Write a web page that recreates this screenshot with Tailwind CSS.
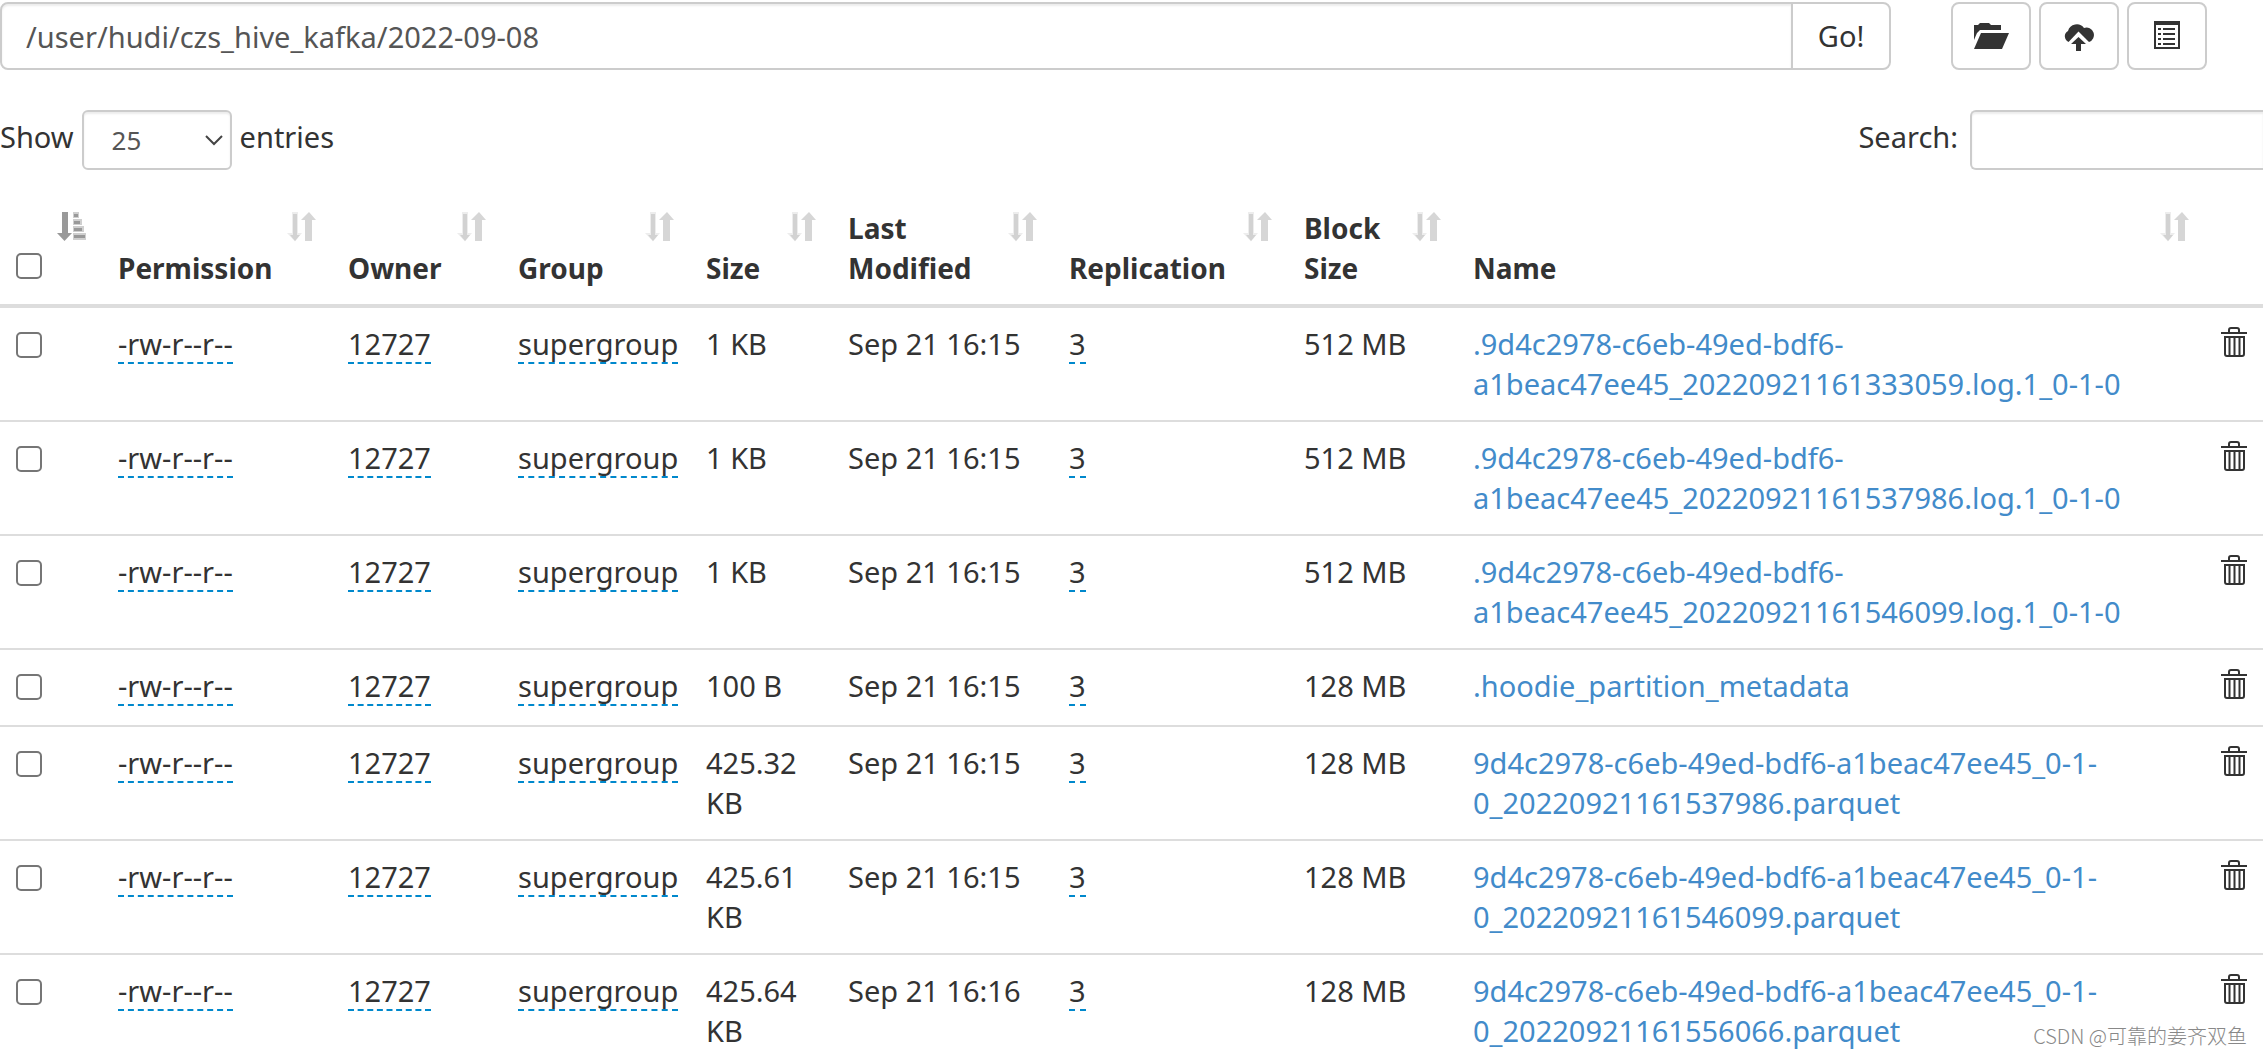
<!DOCTYPE html>
<html lang="en">
<head>
<meta charset="utf-8">
<title>Browse Directory</title>
<script src="https://cdn.jsdelivr.net/npm/@tailwindcss/browser@4"></script>
</head>
<body class="bg-white">
<svg class="hidden" aria-hidden="true">
  <symbol id="sort" viewBox="0 0 30 30">
    <path fill="#ededed" d="M5 0h6v21h4L8 29.500 0 21h5z"/>
    <path fill="#d2d2d2" d="M6 2h4v21h3l-5 6-5-6h3z"/>
    <path fill="#d6d6d6" d="M22 0l7 8h-4v21h-7V8h-4z"/>
  </symbol>
  <symbol id="sort-active" viewBox="0 0 30 30">
    <path fill="#999" d="M5 0h6v21h4L7.500 29 0 21h5z"/>
    <path fill="#cfcfcf" d="M16 0h6v6h-6zM16 7h9v6h-9zM16 14h11v6H16zM16 21h13v7H16z"/>
    <path fill="#999" d="M17 2h4v3h-4zM17 9h6v3h-6zM17 16h8v3h-8zM17 23h11v3H17z"/>
  </symbol>
  <symbol id="trash" viewBox="0 0 26 30">
    <path fill="none" stroke="#333" stroke-width="2" d="M8 6V3q0-2 2-2h6q2 0 2 2v3M0 6h26M4 9v18q0 2 2 2h15q2 0 2-2V9M3 10h20M8.500 10v18M13.500 10v18M18.500 10v18"/>
  </symbol>
</svg>
<main class="relative min-h-screen overflow-hidden pt-[2px] font-['Noto_Sans','Open_Sans',sans-serif] text-[29px] leading-10 text-[#333]">

  <div class="flex pr-14">
    <form class="flex min-w-0 flex-1">
      <input type="text" aria-label="Directory path" value="/user/hudi/czs_hive_kafka/2022-09-08" class="h-[68px] min-w-0 flex-1 rounded-l-lg border-2 border-[#ccc] px-6 text-[#555] shadow-[inset_0_2px_2px_rgba(0,0,0,0.075)]">
      <button type="button" class="-ml-[2px] h-[68px] w-[100px] rounded-r-lg border-2 border-[#ccc] bg-white">Go!</button>
    </form>
    <div class="ml-[60px] flex gap-2">
      <button type="button" aria-label="Create directory" class="flex h-[68px] w-20 items-center justify-center rounded-lg border-2 border-[#ccc] bg-white">
        <svg class="h-7 w-9" viewBox="0 0 36 28"><path fill="#333" d="M1 18V3h4l2-2h9l2 2h10v5H7L4 11zM8 11h28l-7 16H1z"/></svg>
      </button>
      <button type="button" aria-label="Upload files" class="flex h-[68px] w-20 items-center justify-center rounded-lg border-2 border-[#ccc] bg-white">
        <svg class="h-8 w-8" viewBox="0 0 32 32"><path fill="#333" d="M6 22a6 6 0 0 1-1-11A9 9 0 0 1 21 8a7 7 0 0 1 5 14L15.500 11.500 6 21.500zM15.500 17l7.500 7h-5v7h-5v-7H8z"/></svg>
      </button>
      <button type="button" aria-label="Cut and paste" class="flex h-[68px] w-20 items-center justify-center rounded-lg border-2 border-[#ccc] bg-white">
        <svg class="h-8 w-7" viewBox="0 0 28 32"><path fill="#333" fill-rule="evenodd" d="M1 1h26v28H1zM3 5v22h22V5z"/><path stroke="#333" stroke-width="2" d="M5 9h3M5 14h3M5 19h3M5 24h3M10 9h12M10 14h12M10 19h12M10 24h12"/></svg>
      </button>
    </div>
  </div>

  <div class="mt-10 flex items-start justify-between">
    <div class="flex items-start">
      <label for="length" class="mt-[7px]">Show</label>
      <div class="relative ml-2">
        <select id="length" class="h-[60px] w-[150px] appearance-none rounded-md border-2 border-[#ccc] bg-white pl-7 text-[26px] text-[#555] shadow-[inset_0_2px_2px_rgba(0,0,0,0.075)]"><option>25</option></select>
        <svg class="pointer-events-none absolute top-6 right-2 h-3 w-5" viewBox="0 0 20 12"><path fill="none" stroke="#444" stroke-width="2" d="M2 2l8 8 8-8"/></svg>
      </div>
      <span class="mt-[7px] ml-2">entries</span>
    </div>
    <div class="flex items-start">
      <label for="search" class="mt-[7px]">Search:</label>
      <input id="search" type="search" class="ml-3 h-[60px] w-[293px] rounded-l-md border-2 border-r-0 border-[#ccc] px-5 text-[26px] shadow-[inset_0_2px_2px_rgba(0,0,0,0.075)]">
    </div>
  </div>

  <table class="mt-[22px] w-full table-fixed border-collapse text-left">
    <colgroup>
      <col class="w-[102px]"><col class="w-[230px]"><col class="w-[170px]"><col class="w-[188px]"><col class="w-[142px]"><col class="w-[221px]"><col class="w-[235px]"><col class="w-[169px]"><col><col class="w-[58px]">
    </colgroup>
    <thead id="head"></thead>
    <tbody id="rows"></tbody>
  </table>

  <div class="absolute right-4 bottom-[6px] font-['Noto_Sans_CJK_SC',sans-serif] text-[20px] leading-7 font-light text-[#888]">CSDN @可靠的姜齐双鱼</div>
</main>
<script>
const icon = (id) => `<svg class="absolute top-5 right-[15px] h-[30px] w-[30px]"><use href="#${id}"/></svg>`;
const box = (label) => `<input type="checkbox" aria-label="${label}" class="block h-[26px] w-[26px] appearance-none rounded-[5px] border-2 border-[#767676] bg-white">`;
const heads = ['Permission', 'Owner', 'Group', 'Size', 'Last Modified', 'Replication', 'Block Size', 'Name'];
document.getElementById('head').innerHTML = `<tr class="border-b-4 border-[#ddd] align-bottom">
  <th class="relative pb-[25px] pl-4">${icon('sort-active')}${box('Select all')}</th>
  ${heads.map(h => `<th class="relative py-4 pr-[60px] pl-4 text-[28px] font-bold">${h}${icon('sort')}</th>`).join('')}
  <th></th></tr>`;
const files = [
  ['1 KB', 'Sep 21 16:15', '512 MB', '.9d4c2978-c6eb-49ed-bdf6-a1beac47ee45_20220921161333059.log.1_0-1-0'],
  ['1 KB', 'Sep 21 16:15', '512 MB', '.9d4c2978-c6eb-49ed-bdf6-a1beac47ee45_20220921161537986.log.1_0-1-0'],
  ['1 KB', 'Sep 21 16:15', '512 MB', '.9d4c2978-c6eb-49ed-bdf6-a1beac47ee45_20220921161546099.log.1_0-1-0'],
  ['100 B', 'Sep 21 16:15', '128 MB', '.hoodie_partition_metadata'],
  ['425.32 KB', 'Sep 21 16:15', '128 MB', '9d4c2978-c6eb-49ed-bdf6-a1beac47ee45_0-1-0_20220921161537986.parquet'],
  ['425.61 KB', 'Sep 21 16:15', '128 MB', '9d4c2978-c6eb-49ed-bdf6-a1beac47ee45_0-1-0_20220921161546099.parquet'],
  ['425.64 KB', 'Sep 21 16:16', '128 MB', '9d4c2978-c6eb-49ed-bdf6-a1beac47ee45_0-1-0_20220921161556066.parquet'],
];
const edit = (t) => `<td class="pt-4 pl-4"><a href="#" class="block h-10 w-fit border-b-2 border-dashed border-[#08c] whitespace-nowrap">${t}</a></td>`;
const cell = (t) => `<td class="pt-4 pr-4 pl-4">${t}</td>`;
document.getElementById('rows').innerHTML = files.map(([size, time, block, name]) => `<tr class="h-[77px] border-b-2 border-[#ddd] align-top last:border-b-0">
  <td class="pt-6 pl-4">${box('Select ' + name)}</td>
  ${edit('-rw-r--r--')}${edit('12727')}${edit('supergroup')}
  ${cell(size)}
  <td class="pt-4 pl-4 whitespace-nowrap">${time}</td>
  ${edit('3')}
  <td class="pt-4 pl-4 whitespace-nowrap">${block}</td>
  <td class="px-4 pt-4 [tr:not(:last-child)>&]:pb-4"><a href="#" class="text-[#428bca]">${name}</a></td>
  <td class="pt-[19px] pl-4"><button type="button" aria-label="Delete" class="block"><svg class="h-[30px] w-[26px]"><use href="#trash"/></svg></button></td>
</tr>`).join('');
</script>
</body>
</html>
